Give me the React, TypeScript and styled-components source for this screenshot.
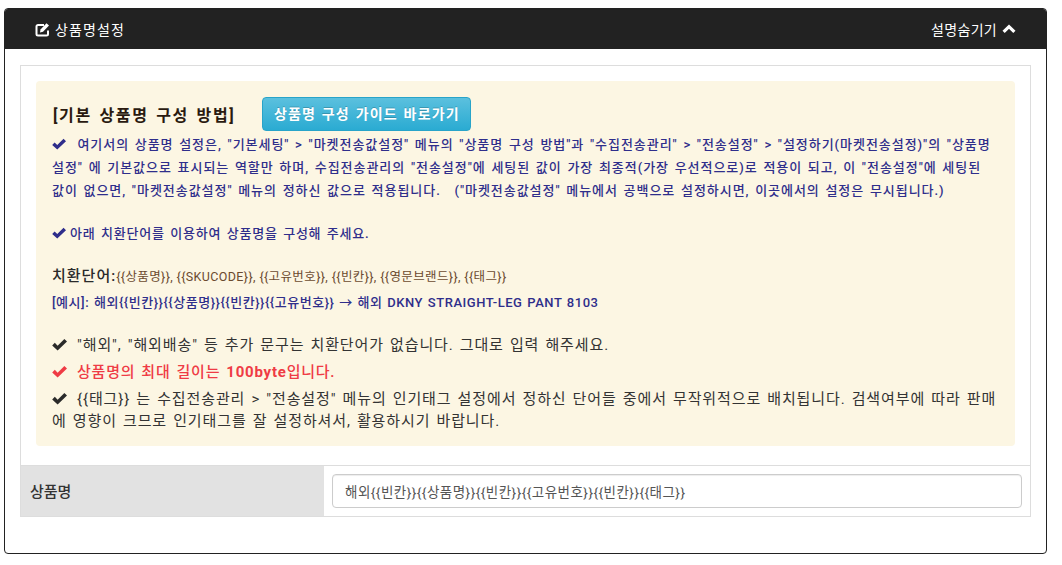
import React from "react";
import styled, { createGlobalStyle } from "styled-components";

const FONT = `Roboto, "Noto Sans CJK KR", sans-serif`;
const Global = createGlobalStyle`
  html, body { margin: 0; padding: 0; background: #fff; }
  body { font-family: ${FONT}; font-size: 14px; color: #333; }
`;
const Page = styled.div`
  padding: 8px 15px 0 4px;
  width: 1062px;
  box-sizing: border-box;
`;
const Panel = styled.section`
  height: 546px;
  box-sizing: border-box;
  border: 1px solid #222;
  border-radius: 4px;
  overflow: hidden;
`;
const Heading = styled.header`
  height: 40px;
  background: #222;
  color: #fff;
  display: flex;
  align-items: center;
  justify-content: space-between;
  padding: 0 30px;
  font-size: 14px;
`;
const HeadGroup = styled.span<{ $ls: number }>`
  display: flex;
  align-items: center;
  gap: 5px;
  letter-spacing: ${(p) => p.$ls}px;
`;
const Body = styled.div`
  padding: 16px 15px 0;
`;
const Box = styled.div`
  border: 1px solid #ddd;
  height: 452px;
  box-sizing: border-box;
  display: flex;
  flex-direction: column;
`;
const Notice = styled.div`
  margin: 15px 15px 0;
  height: 366px;
  box-sizing: border-box;
  background: #fcf6e3;
  border-radius: 4px;
  padding: 15px 16px 0;
`;
const TitleRow = styled.div`
  display: flex;
  align-items: center;
  gap: 27px;
  height: 36px;
`;
const Title = styled.h4`
  margin: 0;
  font-size: 16px;
  font-weight: 700;
  color: #2a1a10;
  letter-spacing: 1.65px;
  word-spacing: 2px;
  padding-left: 1px;
`;
const GuideButton = styled.a`
  display: block;
  box-sizing: border-box;
  width: 209px;
  height: 34px;
  line-height: 32px;
  text-align: center;
  border: 1px solid #28a4c9;
  border-radius: 4px;
  color: #fff;
  font-size: 14px;
  font-weight: 700;
  letter-spacing: 1.2px;
  word-spacing: 1px;
  text-shadow: 0 -1px 0 rgba(0, 0, 0, 0.2);
  background: linear-gradient(#5bc0de, #2aabd2);
`;
const Blue = styled.p<{ $top: number; $ls: number }>`
  margin: ${(p) => p.$top}px 0 0;
  color: #2f2e8b;
  font-size: 13px;
  font-weight: 500;
  line-height: 23px;
  letter-spacing: ${(p) => p.$ls}px;
  word-spacing: 1.5px;
  white-space: nowrap;
`;
const InlineGap = styled.span`
  display: inline-block;
  width: 8px;
`;
const Keys = styled.p`
  margin: 18px 0 0;
  font-size: 12.5px;
  line-height: 26px;
  color: #6b4a2f;
  letter-spacing: 0.38px;
  white-space: nowrap;
`;
const KeysLabel = styled.b`
  font-size: 15px;
  font-weight: 500;
  color: #2a2a2a;
  letter-spacing: 1px;
`;
const Example = styled.p`
  margin: 0;
  color: #2f2e8b;
  font-size: 13px;
  font-weight: 500;
  line-height: 26px;
  letter-spacing: 0.54px;
  word-spacing: 1px;
  white-space: nowrap;
`;
const Notes = styled.div`
  margin-top: 18px;
  display: flex;
  flex-direction: column;
  gap: 5px;
`;
const Note = styled.p<{ $red?: boolean }>`
  margin: 0;
  font-size: 15px;
  line-height: 22px;
  font-weight: ${(p) => (p.$red ? 500 : 400)};
  color: ${(p) => (p.$red ? "#ef3b45" : "#333")};
  letter-spacing: ${(p) => (p.$red ? 0.78 : 0.89)}px;
  word-spacing: 1.5px;
  white-space: nowrap;
`;
const CheckSvg = styled.svg<{ $color: string; $size: number; $gap: number }>`
  width: ${(p) => p.$size}px;
  height: ${(p) => p.$size}px;
  fill: ${(p) => p.$color};
  vertical-align: -2px;
  margin-right: ${(p) => p.$gap}px;
`;
const Check = (p: { color: string; size: number; gap: number }) => (
  <CheckSvg viewBox="0 0 16 16" $color={p.color} $size={p.size} $gap={p.gap}>
    <path d="M0.2 9 L3 6.2 L6 9.2 L13.2 2 L16 4.8 L6 14.4 Z" />
  </CheckSvg>
);
const EditSvg = styled.svg`
  width: 15px;
  height: 15px;
  color: #fff;
`;
const ChevronSvg = styled.svg`
  width: 14px;
  height: 10px;
  color: #fff;
`;
const Strong = styled.strong`
  font-weight: 700;
`;
const Row = styled.div`
  margin-top: 19px;
  border-top: 1px solid #ddd;
  flex: 1;
  display: flex;
`;
const Label = styled.div`
  width: 303px;
  background: #e2e2e2;
  display: flex;
  align-items: center;
  padding: 0 0 2px 9px;
  box-sizing: border-box;
  font-size: 15px;
  font-weight: 500;
  color: #333;
`;
const InputCell = styled.div`
  flex: 1;
  padding: 8px;
`;
const Input = styled.input`
  display: block;
  width: 100%;
  height: 34px;
  box-sizing: border-box;
  padding: 0 12px;
  border: 1px solid #ccc;
  border-radius: 4px;
  box-shadow: inset 0 1px 1px rgba(0, 0, 0, 0.075);
  font: 400 13.5px ${FONT};
  letter-spacing: 0.48px;
  color: #555;
`;

export default function App() {
  return (
    <>
      <Global />
      <Page>
        <Panel>
          <Heading>
            <HeadGroup $ls={1.1}>
              <EditSvg viewBox="0 0 15 15" fill="none">
                <path d="M13 8.5V12a1.5 1.5 0 0 1-1.5 1.5H3A1.5 1.5 0 0 1 1.5 12V4.5A1.5 1.5 0 0 1 3 3h6" stroke="currentColor" strokeWidth="2" />
                <path d="M5.5 7.5 11.5 1.2 14 3.6 8 9.8 5 10.5Z" fill="currentColor" />
              </EditSvg>
              상품명설정
            </HeadGroup>
            <HeadGroup $ls={0.3}>
              설명숨기기
              <ChevronSvg viewBox="0 0 14 10" fill="none">
                <path d="M1.6 7.8 7 2.6 12.4 7.8" stroke="currentColor" strokeWidth="3.2" />
              </ChevronSvg>
            </HeadGroup>
          </Heading>
          <Body>
            <Box>
              <Notice>
                <TitleRow>
                  <Title>[기본 상품명 구성 방법]</Title>
                  <GuideButton>상품명 구성 가이드 바로가기</GuideButton>
                </TitleRow>
                <Blue $top={1} $ls={0.96}>
                  <Check color="#2f2e8b" size={14} gap={0} />&nbsp; 여기서의 상품명 설정은, "기본세팅" &gt; "마켓전송값설정" 메뉴의 "상품명 구성 방법"과 "수집전송관리" &gt; "전송설정" &gt; "설정하기(마켓전송설정)"의 "상품명<br />
                  설정" 에 기본값으로 표시되는 역할만 하며, 수집전송관리의 "전송설정"에 세팅된 값이 가장 최종적(가장 우선적으로)로 적용이 되고, 이 "전송설정"에 세팅된<br />
                  값이 없으면, "마켓전송값설정" 메뉴의 정하신 값으로 적용됩니다. <InlineGap />("마켓전송값설정" 메뉴에서 공백으로 설정하시면, 이곳에서의 설정은 무시됩니다.)
                </Blue>
                <Blue $top={20} $ls={0.78}><Check color="#2f2e8b" size={14} gap={4} />아래 치환단어를 이용하여 상품명을 구성해 주세요.</Blue>
                <Keys><KeysLabel>치환단어:</KeysLabel>{"{{상품명}}, {{SKUCODE}}, {{고유번호}}, {{빈칸}}, {{영문브랜드}}, {{태그}}"}</Keys>
                <Example>{"[예시]: 해외{{빈칸}}{{상품명}}{{빈칸}}{{고유번호}} → 해외 DKNY STRAIGHT-LEG PANT 8103"}</Example>
                <Notes>
                  <Note><Check color="#2a2a2a" size={15} gap={10} />"해외", "해외배송" 등 추가 문구는 치환단어가 없습니다. 그대로 입력 해주세요.</Note>
                  <Note $red><Check color="#ef3b45" size={15} gap={10} />상품명의 최대 길이는 <Strong>100byte</Strong>입니다.</Note>
                  <Note>
                    <Check color="#2a2a2a" size={15} gap={10} />{"{{태그}}"} 는 수집전송관리 &gt; "전송설정" 메뉴의 인기태그 설정에서 정하신 단어들 중에서 무작위적으로 배치됩니다. 검색여부에 따라 판매<br />
                    에 영향이 크므로 인기태그를 잘 설정하셔서, 활용하시기 바랍니다.
                  </Note>
                </Notes>
              </Notice>
              <Row>
                <Label>상품명</Label>
                <InputCell>
                  <Input readOnly value="해외{{빈칸}}{{상품명}}{{빈칸}}{{고유번호}}{{빈칸}}{{태그}}" />
                </InputCell>
              </Row>
            </Box>
          </Body>
        </Panel>
      </Page>
    </>
  );
}
